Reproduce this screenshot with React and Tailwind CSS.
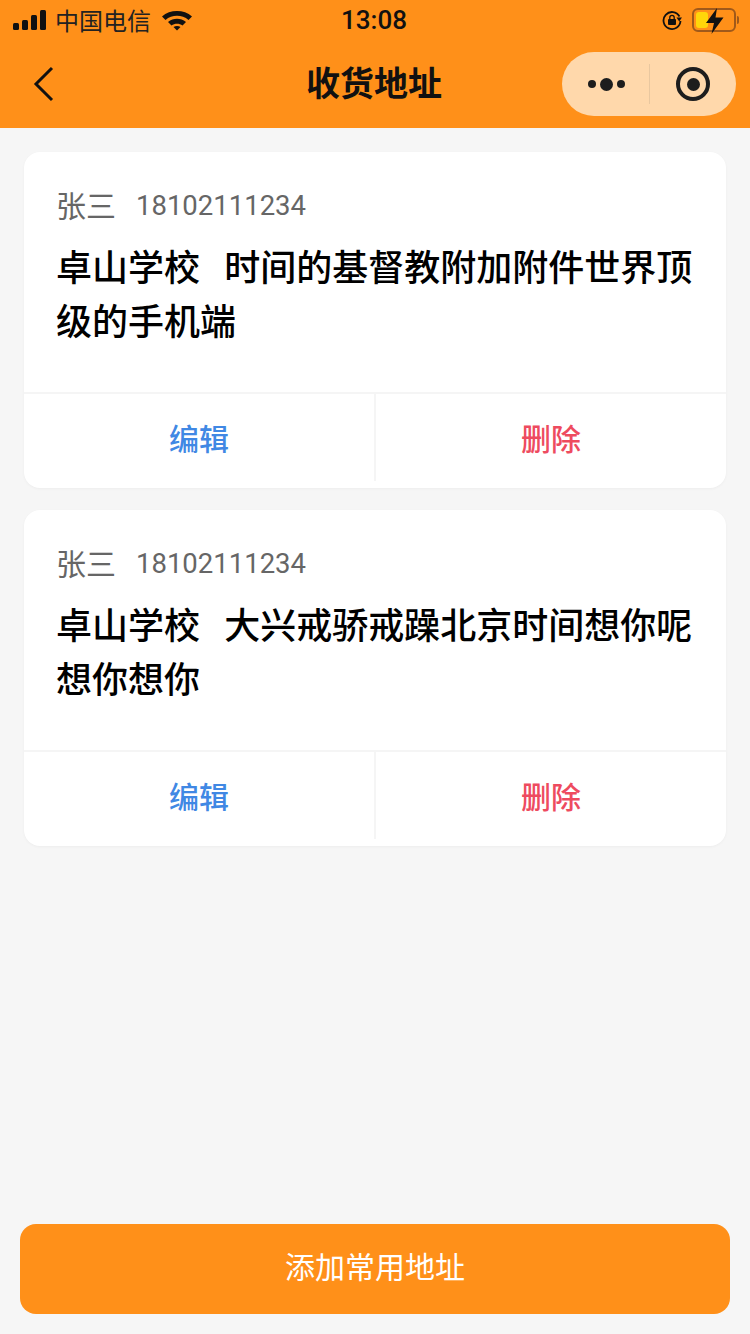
import React from "react";

const addresses = [
  { name: "张三", phone: "18102111234", school: "卓山学校", detail: "时间的基督教附加附件世界顶级的手机端" },
  { name: "张三", phone: "18102111234", school: "卓山学校", detail: "大兴戒骄戒躁北京时间想你呢想你想你" },
];

const StatusBar = () => (
  <div className="flex h-[40px] items-center justify-between pl-[13px] pr-[11px] text-black">
    <div className="flex w-[200px] items-center">
      <div className="flex items-end gap-[3px]">
        <span className="h-[7px] w-[6px] rounded-[1.5px] bg-[#111]" />
        <span className="h-[10px] w-[6px] rounded-[1.5px] bg-[#111]" />
        <span className="h-[15px] w-[6px] rounded-[1.5px] bg-[#111]" />
        <span className="h-[20px] w-[6px] rounded-[1.5px] bg-[#111]" />
      </div>
      <span className="ml-[9px] text-[24px] leading-[30px] text-[#222]">中国电信</span>
      <svg className="ml-[11px]" width="30" height="22" viewBox="0 0 30 22">
        <path d="M0 7.500C8 .2 22 .2 30 7.500L26.500 11C20 5.400 10 5.400 3.500 11Z" fill="#111" />
        <path d="M6 13C11.500 8.800 18.500 8.800 24 13L20.500 16.500C17.500 14 12.500 14 9.500 16.500Z" fill="#111" />
        <path d="M11.500 18C13.500 16.700 16.500 16.700 18.500 18L15 21.500Z" fill="#111" />
      </svg>
    </div>
    <span className="text-[26px] font-medium leading-[30px] text-[#111] [font-family:Roboto,sans-serif]">13:08</span>
    <div className="flex w-[204px] items-center justify-end">
      <svg width="22" height="22" viewBox="0 0 22 22" fill="none">
        <path d="M18.500 7.500A8.500 8.500 0 1 0 19.500 12" stroke="#111" strokeWidth="1.800" />
        <path d="M15.500 8.500H21L18.200 12.500Z" fill="#111" />
        <rect x="7" y="10" width="8" height="6" rx="1" fill="#111" />
        <path d="M8.800 10V8.500a2.200 2.200 0 0 1 4.400 0V10" stroke="#111" strokeWidth="1.300" />
      </svg>
      <div className="relative ml-[9px] flex h-[24px] w-[44px] items-center rounded-[6px] border-2 border-[#a0591a] p-[2px]">
        <span className="h-full w-[12px] rounded-[3px] bg-[#ffd60a]" />
        <svg className="absolute left-[11px] top-[-3px]" width="20" height="28" viewBox="0 0 20 28">
          <path d="M12 1L1 16H9L6.500 27L18.500 10.500H10.500Z" fill="#111" />
        </svg>
      </div>
      <span className="ml-[1px] h-[8px] w-[2px] rounded-r-sm bg-[#a0591a]" />
    </div>
  </div>
);

const NavBar = () => (
  <div className="relative flex h-[88px] items-center justify-center">
    <svg className="absolute left-[32px] top-[26px]" width="24" height="36" viewBox="0 0 24 36" fill="none">
      <path d="M20 2L4 18L20 34" stroke="#111" strokeWidth="3" />
    </svg>
    <span className="-translate-x-[1px] -translate-y-[2px] text-[34px] font-bold leading-[40px] text-[#111]">收货地址</span>
    <div className="absolute right-[14px] top-[12px] flex h-[64px] w-[174px] items-center rounded-full bg-[#ffd8ab]">
      <div className="flex w-[87px] items-center justify-center gap-[4px] pl-[1px]">
        <span className="h-[8px] w-[8px] rounded-full bg-[#1d1d1d]" />
        <span className="h-[13px] w-[13px] rounded-full bg-[#1d1d1d]" />
        <span className="h-[8px] w-[8px] rounded-full bg-[#1d1d1d]" />
      </div>
      <span className="h-[40px] w-px bg-[#e9c79f]" />
      <div className="flex flex-1 items-center justify-center">
        <div className="flex h-[34px] w-[34px] items-center justify-center rounded-full border-[4px] border-[#1d1d1d]">
          <span className="h-[13px] w-[13px] rounded-full bg-[#1d1d1d]" />
        </div>
      </div>
    </div>
  </div>
);

const AddressCard = ({ item }) => (
  <div className="overflow-hidden rounded-[16px] bg-white shadow-[0_1px_3px_rgba(0,0,0,0.04)]">
    <div className="h-[240px] pl-[32px] pr-[30px] pt-[33px]">
      <div className="flex h-[40px] items-center text-[30px] text-[#666]">
        <span className="-translate-y-[1px]">{item.name}</span>
        <span className="ml-[20px] pt-[2px] text-[27.5px] [font-family:Roboto,sans-serif]">{item.phone}</span>
      </div>
      <p className="mt-[13px] whitespace-pre-wrap text-[36px] font-medium leading-[54px] text-black">
        {`${item.school}   ${item.detail}`}
      </p>
    </div>
    <div className="flex h-[96px] border-t-2 border-[#f5f5f5] pb-[7px]">
      <button className="flex flex-1 items-center justify-center border-r-2 border-[#f5f5f5] pb-[1px] text-[30px] font-medium text-[#4088e4]">编辑</button>
      <button className="flex flex-1 items-center justify-center pb-[1px] text-[30px] font-medium text-[#ee4b5f]">删除</button>
    </div>
  </div>
);

export default function App() {
  return (
    <div
      className="flex h-[1334px] w-[750px] flex-col overflow-hidden bg-[#f6f6f6]"
      style={{ fontFamily: '"Noto Sans CJK SC", "Liberation Sans", sans-serif' }}
    >
      <div className="h-[128px] shrink-0 bg-[#ff9019]">
        <StatusBar />
        <NavBar />
      </div>
      <div className="flex flex-1 flex-col gap-[22px] px-[24px] pt-[24px]">
        {addresses.map((item, idx) => (
          <AddressCard key={idx} item={item} />
        ))}
      </div>
      <div className="px-[20px] pb-[20px]">
        <button className="h-[90px] w-full rounded-[16px] bg-[#ff9019] pb-[7px] text-[30px] text-white">添加常用地址</button>
      </div>
    </div>
  );
}
